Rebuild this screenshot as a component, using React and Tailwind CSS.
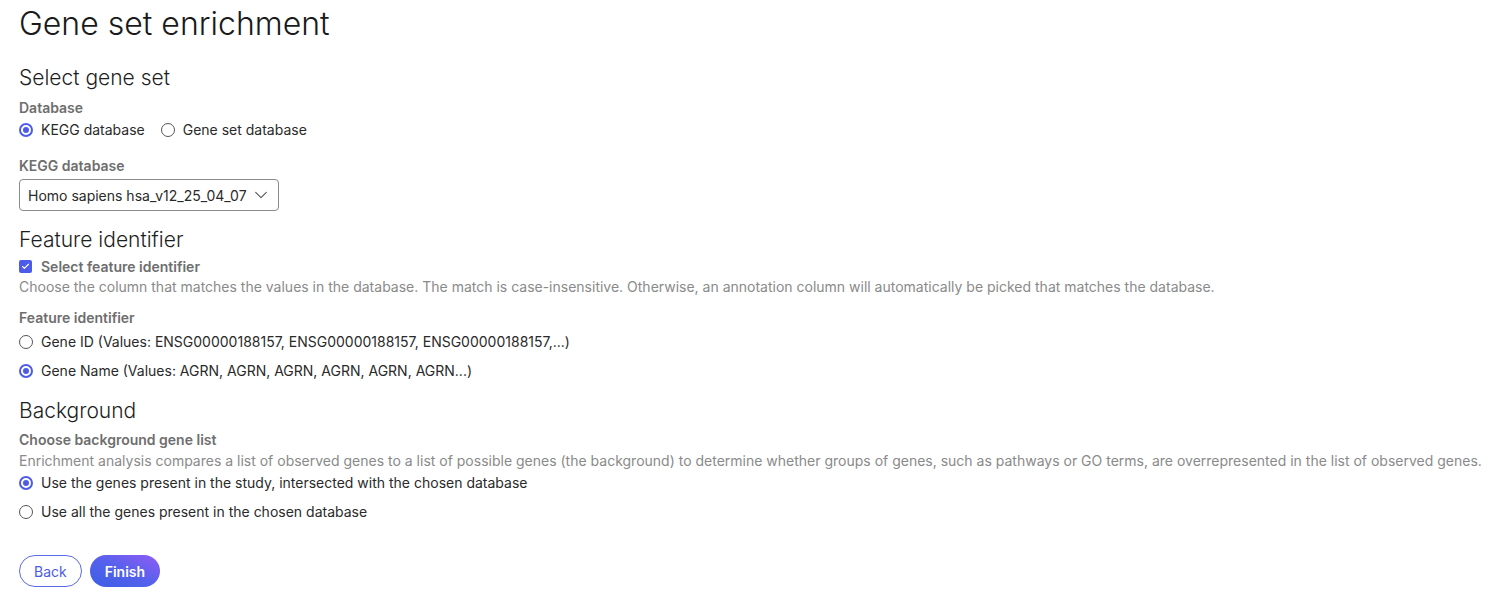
import React from 'react'

const labelClass = 'text-[14px] font-semibold text-[#6e6e6e] leading-5'
const headingClass = 'text-[21px] font-light text-[#1e1e1e] leading-7'
const hintClass = 'text-[14px] text-[#8a8a8a] leading-5'

function Radio({ checked, label }) {
  return (
    <label className="flex items-center gap-[8px] h-[29px] text-[14px] text-[#2a2a2a]">
      {checked ? (
        <span className="w-[14px] h-[14px] rounded-full border-2 border-[#4c5ce8] flex items-center justify-center">
          <span className="w-[6px] h-[6px] rounded-full bg-[#4c5ce8]" />
        </span>
      ) : (
        <span className="w-[14px] h-[14px] rounded-full border border-[#555]" />
      )}
      <span>{label}</span>
    </label>
  )
}

export default function App() {
  return (
    <div
      className="bg-white min-h-[598px] px-[19px] pt-[2px]"
      style={{ fontFamily: 'Inter, "Noto Sans", sans-serif' }}
    >
      <h1 className="text-[32px] font-light text-[#1a1a1a] leading-[44px]">Gene set enrichment</h1>

      <h2 className={`${headingClass} mt-[18px]`}>Select gene set</h2>
      <div className={`${labelClass} mt-[6px]`}>Database</div>
      <div className="flex gap-[16px] -mt-[3px]">
        <Radio checked label="KEGG database" />
        <Radio label="Gene set database" />
      </div>

      <div className={`${labelClass} mt-[12px]`}>KEGG database</div>
      <button className="mt-[3px] h-[32px] w-[260px] border border-[#8a8a8a] rounded-[4px] pl-[8px] pr-[9px] flex items-center justify-between text-[14px] text-[#2a2a2a]">
        <span>Homo sapiens hsa_v12_25_04_07</span>
        <svg width="16" height="16" viewBox="0 0 24 24" fill="none" stroke="#555" strokeWidth="1.6" strokeLinecap="round" strokeLinejoin="round">
          <path d="m4 8 8 8 8-8" />
        </svg>
      </button>

      <h2 className={`${headingClass} mt-[15px]`}>Feature identifier</h2>
      <label className="flex items-center gap-[9px] mt-[2px] h-[21px]">
        <span className="w-[13px] h-[13px] rounded-[2px] bg-[#4c5ce8] flex items-center justify-center">
          <svg width="9" height="9" viewBox="0 0 24 24" fill="none" stroke="white" strokeWidth="3" strokeLinecap="round" strokeLinejoin="round">
            <path d="M20 6 9 17l-5-5" />
          </svg>
        </span>
        <span className="text-[14px] font-semibold text-[#6e6e6e]">Select feature identifier</span>
      </label>
      <p className={hintClass}>
        Choose the column that matches the values in the database. The match is case-insensitive. Otherwise, an annotation column will automatically be picked that matches the database.
      </p>

      <div className={`${labelClass} mt-[11px]`}>Feature identifier</div>
      <div className="flex flex-col -mt-[1px]">
        <Radio label="Gene ID (Values: ENSG00000188157, ENSG00000188157, ENSG00000188157,...)" />
        <Radio checked label="Gene Name (Values: AGRN, AGRN, AGRN, AGRN, AGRN, AGRN...)" />
      </div>

      <h2 className={`${headingClass} mt-[12px]`}>Background</h2>
      <div className={`${labelClass} mt-[5px]`}>Choose background gene list</div>
      <p className={`${hintClass} mt-[1px] whitespace-nowrap`}>
        Enrichment analysis compares a list of observed genes to a list of possible genes (the background) to determine whether groups of genes, such as pathways or GO terms, are overrepresented in the list of observed genes.
      </p>
      <div className="flex flex-col -mt-[3px]">
        <Radio checked label="Use the genes present in the study, intersected with the chosen database" />
        <Radio label="Use all the genes present in the chosen database" />
      </div>

      <div className="flex gap-[8px] mt-[29px]">
        <button className="h-[32px] px-[14px] rounded-full border border-[#5a6ae8] text-[14px] text-[#4c5ce8]">
          Back
        </button>
        <button className="h-[32px] px-[15px] rounded-full bg-gradient-to-bl from-[#8e5cf5] via-[#5560ec] to-[#3a5fe5] text-[14px] font-semibold text-white">
          Finish
        </button>
      </div>
    </div>
  )
}
